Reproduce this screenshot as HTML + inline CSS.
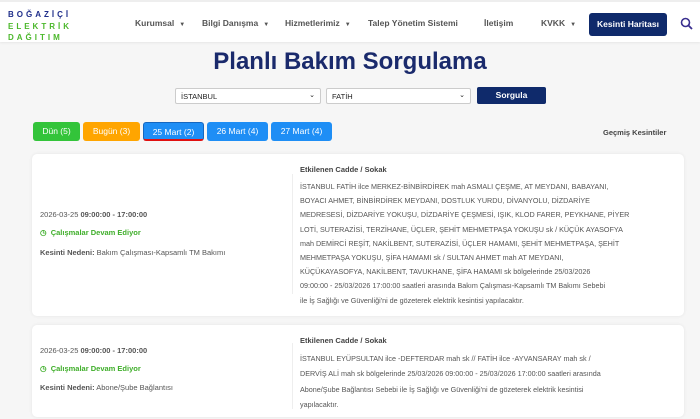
<!DOCTYPE html><html><head><meta charset="utf-8"><style>
*{margin:0;padding:0;box-sizing:border-box}
body{width:700px;height:419px;overflow:hidden;background:#f6f6f6;font-family:"Liberation Sans",sans-serif;position:relative}
.hdr{position:absolute;left:0;top:0;width:700px;height:42px;background:#fff;border-top:2px solid #eee;box-shadow:0 1px 2px #e6e6e6}
.logo{position:absolute;left:8px;top:7px;font-weight:bold;font-size:8px;letter-spacing:3px;line-height:11.5px}
.nav{position:absolute;top:16px;font-size:8.5px;color:#555;font-weight:bold}
.nav .c{font-size:6px;margin-left:5px}
.kh{position:absolute;left:589px;top:11px;width:78px;height:23px;background:#0f2a6b;color:#fff;font-size:8.5px;font-weight:bold;border-radius:3px;text-align:center;line-height:23px}
h1{position:absolute;left:0;width:700px;top:48px;text-align:center;font-size:24px;color:#1a2a6c;font-weight:bold}
.sel{position:absolute;top:88px;height:16px;background:#fff;border:1px solid #ccc;border-radius:2px;font-size:7.5px;padding:3px 5px;color:#222}
.sel span{position:absolute;right:5px;top:2px;font-size:7px}
.sb{position:absolute;left:477px;top:87px;width:69px;height:17px;background:#0f2a6b;color:#fff;font-size:8.5px;font-weight:bold;border-radius:2px;text-align:center;line-height:17px}
.tab{position:absolute;top:122px;height:19px;border-radius:3px;color:#fff;font-size:8.5px;text-align:center;line-height:19px}
.card{position:absolute;left:32px;width:652px;background:#fff;border-radius:5px;box-shadow:0 0 3px #e4e4e4}
.l{position:absolute;left:8px;font-size:7.5px;color:#555}
.r{position:absolute;left:268px;font-size:7.2px;color:#555;line-height:14.2px;white-space:nowrap}
.rh{position:absolute;left:268px;font-size:7.5px;color:#444;font-weight:bold}
.g{color:#3fae2a;font-weight:bold}
.dv{position:absolute;left:260px;width:1px;background:#eee}
</style></head><body>
<div class="hdr">
<div class="logo"><span style="color:#1e2d8a">BOĞAZİÇİ</span><br><span style="color:#4cb82c">ELEKTRİK</span><br><span style="color:#4cb82c">DAĞITIM</span></div>
<div class="nav" style="left:135px">Kurumsal<span class="c">▼</span></div>
<div class="nav" style="left:202px">Bilgi Danışma<span class="c">▼</span></div>
<div class="nav" style="left:285px">Hizmetlerimiz<span class="c">▼</span></div>
<div class="nav" style="left:368px">Talep Yönetim Sistemi</div>
<div class="nav" style="left:484px">İletişim</div>
<div class="nav" style="left:541px">KVKK<span class="c">▼</span></div>
<div class="kh">Kesinti Haritası</div>
<svg style="position:absolute;left:680px;top:15px" width="13" height="13" viewBox="0 0 13 13"><circle cx="5.5" cy="5.5" r="4" fill="none" stroke="#3a2f8f" stroke-width="1.6"/><line x1="8.5" y1="8.5" x2="12" y2="12" stroke="#3a2f8f" stroke-width="1.8"/></svg>
</div>
<h1>Planlı Bakım Sorgulama</h1>
<div class="sel" style="left:175px;width:146px">İSTANBUL<span>⌄</span></div>
<div class="sel" style="left:326px;width:145px">FATİH<span>⌄</span></div>
<div class="sb">Sorgula</div>
<div class="tab" style="left:33px;width:47px;background:#33c43a">Dün (5)</div>
<div class="tab" style="left:83px;width:57px;background:#ffa500">Bugün (3)</div>
<div class="tab" style="left:143px;width:61px;background:#1e8ef5;border:1px solid #1567c0;border-bottom:2px solid #e01010">25 Mart (2)</div>
<div class="tab" style="left:207px;width:61px;background:#1e8ef5">26 Mart (4)</div>
<div class="tab" style="left:271px;width:61px;background:#1e8ef5">27 Mart (4)</div>
<div style="position:absolute;left:603px;top:128px;font-size:7.5px;font-weight:bold;color:#444">Geçmiş Kesintiler</div>
<div class="card" style="top:154px;height:162px">
<div class="dv" style="top:20px;height:120px"></div>
<div class="l" style="top:56px">2026-03-25 <b>09:00:00 - 17:00:00</b></div>
<div class="l g" style="top:74px">◷ &nbsp;Çalışmalar Devam Ediyor</div>
<div class="l" style="top:94px"><b>Kesinti Nedeni:</b> Bakım Çalışması-Kapsamlı TM Bakımı</div>
<div class="rh" style="top:11px">Etkilenen Cadde / Sokak</div>
<div class="r" style="top:26px">İSTANBUL FATİH ilce MERKEZ-BİNBİRDİREK mah ASMALI ÇEŞME, AT MEYDANI, BABAYANI,<br>BOYACI AHMET, BİNBİRDİREK MEYDANI, DOSTLUK YURDU, DİVANYOLU, DİZDARİYE<br>MEDRESESİ, DİZDARİYE YOKUŞU, DİZDARİYE ÇEŞMESİ, IŞIK, KLOD FARER, PEYKHANE, PİYER<br>LOTİ, SUTERAZİSİ, TERZİHANE, ÜÇLER, ŞEHİT MEHMETPAŞA YOKUŞU sk / KÜÇÜK AYASOFYA<br>mah DEMİRCİ REŞİT, NAKİLBENT, SUTERAZİSİ, ÜÇLER HAMAMI, ŞEHİT MEHMETPAŞA, ŞEHİT<br>MEHMETPAŞA YOKUŞU, ŞİFA HAMAMI sk / SULTAN AHMET mah AT MEYDANI,<br>KÜÇÜKAYASOFYA, NAKİLBENT, TAVUKHANE, ŞİFA HAMAMI sk bölgelerinde 25/03/2026<br>09:00:00 - 25/03/2026 17:00:00 saatleri arasında Bakım Çalışması-Kapsamlı TM Bakımı Sebebi<br>ile İş Sağlığı ve Güvenliği'ni de gözeterek elektrik kesintisi yapılacaktır.</div>
</div>
<div class="card" style="top:325px;height:92px">
<div class="dv" style="top:18px;height:66px"></div>
<div class="l" style="top:21px">2026-03-25 <b>09:00:00 - 17:00:00</b></div>
<div class="l g" style="top:39px">◷ &nbsp;Çalışmalar Devam Ediyor</div>
<div class="l" style="top:58px"><b>Kesinti Nedeni:</b> Abone/Şube Bağlantısı</div>
<div class="rh" style="top:11px">Etkilenen Cadde / Sokak</div>
<div class="r" style="top:26px;line-height:15.3px">İSTANBUL EYÜPSULTAN ilce -DEFTERDAR mah sk // FATİH ilce -AYVANSARAY mah sk /<br>DERVİŞ ALİ mah sk bölgelerinde 25/03/2026 09:00:00 - 25/03/2026 17:00:00 saatleri arasında<br>Abone/Şube Bağlantısı Sebebi ile İş Sağlığı ve Güvenliği'ni de gözeterek elektrik kesintisi<br>yapılacaktır.</div>
</div>
</body></html>
